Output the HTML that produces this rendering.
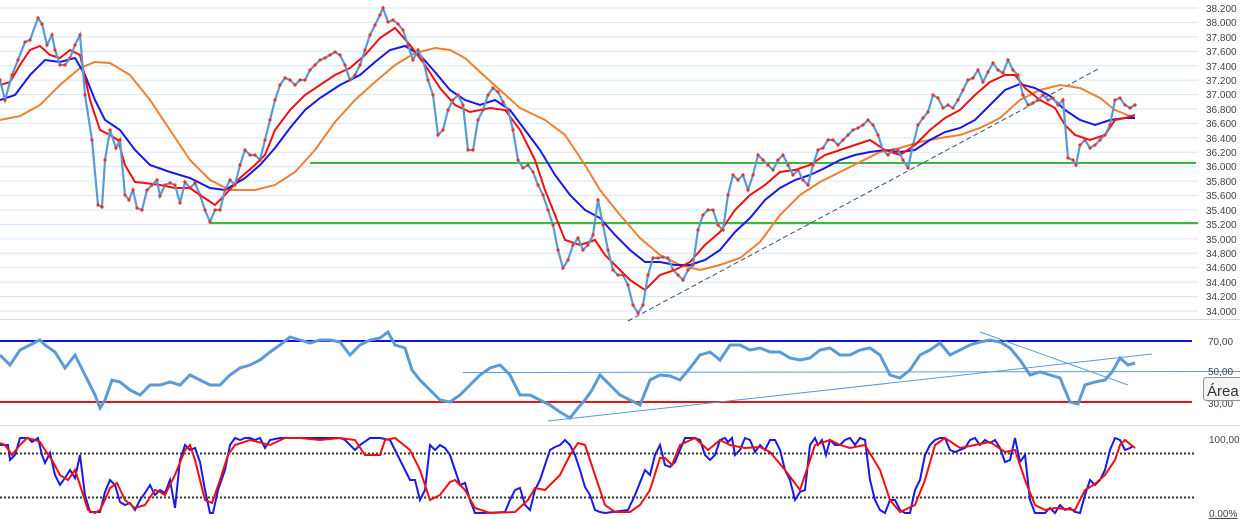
<!DOCTYPE html>
<html><head><meta charset="utf-8"><style>
html,body{margin:0;padding:0;background:#fff;width:1240px;height:519px;overflow:hidden}
svg{display:block}
text{font-family:"Liberation Sans",sans-serif;font-size:10px;fill:#444}
</style></head><body>
<svg width="1240" height="519" viewBox="0 0 1240 519" xmlns="http://www.w3.org/2000/svg">
<defs>
<marker id="d" markerWidth="4" markerHeight="4" refX="2" refY="2" markerUnits="userSpaceOnUse"><circle cx="2" cy="2" r="1.6" fill="#f03020"/></marker>
</defs>
<g stroke="#d6e6f4" stroke-width="1">
<line x1="0" x2="1198" y1="8" y2="8"/><line x1="0" x2="1198" y1="22.4" y2="22.4"/><line x1="0" x2="1198" y1="36.9" y2="36.9"/><line x1="0" x2="1198" y1="51.3" y2="51.3"/><line x1="0" x2="1198" y1="65.7" y2="65.7"/><line x1="0" x2="1198" y1="80.1" y2="80.1"/><line x1="0" x2="1198" y1="94.6" y2="94.6"/><line x1="0" x2="1198" y1="109" y2="109"/><line x1="0" x2="1198" y1="123.4" y2="123.4"/><line x1="0" x2="1198" y1="137.9" y2="137.9"/><line x1="0" x2="1198" y1="152.3" y2="152.3"/><line x1="0" x2="1198" y1="166.7" y2="166.7"/><line x1="0" x2="1198" y1="181.1" y2="181.1"/><line x1="0" x2="1198" y1="195.6" y2="195.6"/><line x1="0" x2="1198" y1="210" y2="210"/><line x1="0" x2="1198" y1="224.4" y2="224.4"/><line x1="0" x2="1198" y1="238.9" y2="238.9"/><line x1="0" x2="1198" y1="253.3" y2="253.3"/><line x1="0" x2="1198" y1="267.7" y2="267.7"/><line x1="0" x2="1198" y1="282.1" y2="282.1"/><line x1="0" x2="1198" y1="296.6" y2="296.6"/><line x1="0" x2="1198" y1="311" y2="311"/>
</g>
<g text-anchor="start">
<text x="1206" y="12">38.200</text><text x="1206" y="26">38.000</text><text x="1206" y="41">37.800</text><text x="1206" y="55">37.600</text><text x="1206" y="70">37.400</text><text x="1206" y="84">37.200</text><text x="1206" y="98">37.000</text><text x="1206" y="113">36.800</text><text x="1206" y="127">36.600</text><text x="1206" y="142">36.400</text><text x="1206" y="156">36.200</text><text x="1206" y="170">36.000</text><text x="1206" y="185">35.800</text><text x="1206" y="199">35.600</text><text x="1206" y="214">35.400</text><text x="1206" y="228">35.200</text><text x="1206" y="243">35.000</text><text x="1206" y="257">34.800</text><text x="1206" y="271">34.600</text><text x="1206" y="286">34.400</text><text x="1206" y="300">34.200</text><text x="1206" y="315">34.000</text>
</g>
<line x1="0" x2="1240" y1="319.5" y2="319.5" stroke="#d8d8d8"/>
<line x1="0" x2="1240" y1="425.5" y2="425.5" stroke="#d8d8d8"/>
<line x1="310" x2="1196" y1="163" y2="163" stroke="#3cb83c" stroke-width="2"/>
<line x1="210" x2="1198" y1="223" y2="223" stroke="#3cb83c" stroke-width="2"/>
<line x1="628" y1="321" x2="1100" y2="68" stroke="#34507a" stroke-width="1" stroke-dasharray="5,3"/>
<polyline fill="none" stroke="#f08030" stroke-width="2" points="0,120 20,116 40,105 60,85 80,68 95,62 110,63 130,75 150,100 170,130 190,160 210,180 230,190 255,190 275,185 295,172 315,150 335,122 355,100 375,82 395,65 415,53 435,48 450,50 465,58 480,72 500,90 520,108 545,120 565,135 585,165 600,190 620,215 640,238 660,255 680,265 700,270 720,265 740,258 760,242 780,215 800,195 820,182 840,172 860,162 880,152 900,148 920,142 940,138 960,135 980,128 1000,118 1020,100 1040,90 1060,85 1080,88 1100,98 1115,110 1135,118"/>
<polyline fill="none" stroke="#1818e8" stroke-width="2" points="0,100 15,95 30,75 45,60 60,62 75,58 85,75 95,100 105,120 120,130 135,150 150,165 170,172 190,178 210,188 225,190 245,178 260,165 275,148 290,128 305,110 320,98 340,85 360,75 375,62 390,50 405,46 420,55 435,72 450,90 465,100 480,105 495,100 510,110 525,130 540,150 555,175 570,195 585,210 600,218 615,235 630,250 645,262 660,262 675,265 690,265 705,260 720,250 735,232 750,218 765,200 780,188 795,180 810,175 825,168 840,160 855,155 870,152 885,150 900,152 915,150 930,140 945,132 960,128 975,120 990,105 1005,90 1020,84 1035,88 1050,96 1065,110 1080,120 1095,125 1110,120 1125,118 1135,118"/>
<polyline fill="none" stroke="#f01010" stroke-width="2" points="0,85 10,82 20,65 30,50 40,46 50,55 60,58 70,50 80,55 90,100 100,130 110,135 118,140 125,165 135,182 145,183 160,185 175,188 190,188 200,195 215,205 225,195 240,178 255,165 265,155 275,130 290,110 305,95 320,85 335,75 350,68 365,55 380,38 395,28 410,45 425,65 440,88 455,105 470,112 490,108 505,110 520,130 535,160 545,190 555,215 565,240 580,245 595,240 605,255 615,265 630,280 645,290 660,275 675,270 690,262 705,245 720,232 735,210 750,195 765,185 780,172 795,170 810,165 825,155 840,150 855,145 870,140 885,150 900,155 915,145 930,130 945,118 960,110 975,95 990,82 1005,75 1015,75 1025,88 1040,100 1055,108 1065,125 1075,135 1090,140 1105,135 1115,120 1125,118 1135,115"/>
<polyline fill="none" stroke="#5b9bd5" stroke-width="2.2" marker-start="url(#d)" marker-mid="url(#d)" marker-end="url(#d)" points="0,80 5,100 12,75 18,60 25,42 30,40 38,18 42,24 47,45 52,35 55,50 60,65 65,65 70,58 75,45 80,35 85,95 92,140 98,205 102,207 105,160 110,130 116,148 120,140 125,195 129,200 133,190 137,208 142,210 147,190 152,185 157,180 160,196 165,185 170,183 175,185 180,203 185,182 190,188 195,183 200,195 205,210 210,222 215,210 220,210 225,190 230,180 235,185 240,165 245,150 250,155 255,155 260,160 265,140 270,120 275,100 280,85 285,78 290,80 295,85 300,80 305,80 310,70 315,65 320,60 325,58 330,55 335,52 340,55 345,65 350,80 355,75 360,65 365,50 370,35 375,25 380,15 383,8 388,22 393,20 398,24 403,30 408,45 413,60 418,50 423,60 428,80 433,95 438,135 443,130 448,110 453,100 458,95 463,105 468,150 473,150 478,120 483,110 488,95 493,88 498,92 503,102 508,110 513,130 518,160 523,168 528,165 533,172 538,185 543,195 548,210 553,225 558,250 563,268 568,260 573,245 578,238 583,250 588,245 593,235 598,200 603,225 608,250 613,270 618,275 623,275 628,285 633,305 638,313 643,305 648,275 653,258 658,258 663,257 668,258 673,270 678,275 683,280 688,270 693,265 698,230 703,215 708,210 713,210 718,225 723,230 728,195 733,175 738,180 743,175 748,190 753,175 758,155 763,160 768,165 773,170 778,160 783,155 788,165 793,175 798,170 803,180 808,185 813,165 818,150 823,148 828,140 833,140 838,145 843,140 848,135 853,130 858,128 863,125 868,120 873,125 878,135 883,150 888,155 893,150 898,150 903,160 908,168 913,145 918,125 923,118 928,112 933,95 938,98 943,108 948,105 953,108 958,100 963,90 968,80 973,78 978,70 983,82 988,72 993,63 998,70 1003,73 1008,60 1013,70 1018,75 1023,95 1028,105 1033,103 1038,100 1043,95 1048,100 1053,98 1058,105 1063,100 1068,158 1073,160 1076,165 1080,145 1085,140 1090,148 1095,145 1100,140 1105,135 1110,125 1115,100 1120,98 1125,105 1130,108 1135,105"/>
<!-- RSI -->
<line x1="0" x2="1192" y1="341" y2="341" stroke="#1010e0" stroke-width="2"/>
<line x1="0" x2="1192" y1="402" y2="402" stroke="#f01010" stroke-width="2"/>
<line x1="463" x2="1240" y1="372.5" y2="371.5" stroke="#5b9bd5" stroke-width="1"/>
<line x1="548" y1="421" x2="1152" y2="354" stroke="#5b9bd5" stroke-width="1"/>
<line x1="980" y1="332" x2="1128" y2="385" stroke="#5b9bd5" stroke-width="1"/>
<polyline fill="none" stroke="#5b9bd5" stroke-width="3" points="0,355 10,365 20,350 30,345 40,340 45,345 55,352 65,368 75,355 85,375 95,395 100,408 105,400 112,380 120,382 130,390 140,395 150,385 160,385 170,382 180,385 190,375 200,380 210,385 220,385 230,375 240,368 250,365 260,360 270,352 280,345 290,337 300,340 310,343 320,340 330,340 340,342 350,355 360,345 370,340 380,338 388,332 395,345 405,348 412,370 420,380 430,390 440,400 450,402 460,395 470,385 480,375 490,368 500,365 510,375 520,395 530,395 540,400 550,405 560,412 570,418 578,408 585,400 592,390 600,375 610,385 620,395 630,400 640,405 650,380 660,375 670,376 680,380 690,368 700,355 710,352 720,360 730,345 740,345 750,350 760,348 770,352 780,352 790,358 800,360 810,358 820,350 830,348 840,355 850,355 860,350 870,348 880,355 890,375 900,378 910,370 920,355 930,350 940,343 950,355 960,350 970,345 980,342 990,340 1000,342 1010,348 1020,360 1030,375 1040,372 1050,375 1060,378 1070,402 1078,404 1085,385 1095,382 1105,380 1112,372 1120,358 1128,365 1135,363"/>
<text x="1208" y="345">70,00</text>
<text x="1208" y="375">50,00</text>
<text x="1208" y="407">30,00</text>
<rect x="1203.5" y="377.5" width="40" height="23" rx="3" fill="#f4f4f6" stroke="#909090"/>
<text x="1207" y="396" style="font-size:15px;fill:#333">Área</text>
<!-- Stoch -->
<line x1="0" x2="1196" y1="453.5" y2="453.5" stroke="#333" stroke-width="2" stroke-dasharray="2,2"/>
<line x1="0" x2="1196" y1="497.5" y2="497.5" stroke="#333" stroke-width="2" stroke-dasharray="2,2"/>
<polyline fill="none" stroke="#1a1ae8" stroke-width="2" points="0,445 8,445 10,460 15,455 20,438 28,438 32,442 38,438 42,455 45,463 50,453 55,475 60,485 65,478 70,470 75,478 80,455 85,495 90,512 100,512 105,492 110,480 115,485 120,502 125,505 130,503 135,510 140,500 145,493 150,485 155,495 160,490 165,493 170,480 175,508 180,460 185,445 190,450 195,448 200,462 205,490 210,513 213,513 218,490 225,470 230,445 235,438 240,440 245,438 250,438 255,440 260,438 265,448 270,440 280,438 300,438 325,438 340,438 345,440 350,445 355,450 360,445 370,438 380,438 390,440 400,460 410,480 415,480 420,500 425,490 430,445 435,450 440,445 445,448 450,455 455,470 460,485 465,483 470,500 475,513 485,513 505,512 510,500 515,490 520,488 525,505 530,510 535,490 540,480 545,465 550,450 555,447 560,445 565,440 570,445 575,455 580,470 585,487 590,495 595,510 600,512 605,513 628,510 635,495 645,470 650,475 655,455 660,445 665,465 670,467 675,462 680,450 685,438 695,438 700,440 705,455 710,460 715,455 720,440 725,438 728,442 732,438 735,455 740,450 745,438 750,440 755,452 760,445 765,450 770,440 775,440 780,450 785,470 790,480 795,500 800,492 805,490 810,445 815,438 818,445 822,440 826,455 830,440 835,445 840,445 845,440 850,438 855,445 860,438 865,440 870,480 875,500 880,510 885,513 890,500 895,500 900,510 905,513 910,513 915,490 920,480 925,455 930,445 935,440 940,438 945,438 950,450 955,452 960,450 965,448 970,440 975,438 980,445 985,440 990,443 995,440 1000,448 1005,462 1010,460 1015,438 1020,462 1025,455 1030,500 1035,513 1045,513 1050,508 1055,513 1060,505 1065,510 1070,508 1075,512 1080,513 1085,495 1090,480 1095,485 1100,480 1105,470 1110,450 1115,438 1120,440 1125,450 1130,448 1133,446"/>
<polyline fill="none" stroke="#f01010" stroke-width="2" points="0,443 5,445 12,455 20,445 27,438 35,440 40,442 45,450 52,460 60,475 68,480 75,470 80,485 88,510 95,513 100,510 105,500 110,488 117,483 125,500 135,508 145,505 155,490 160,492 165,495 175,475 185,450 190,445 195,460 205,500 212,503 220,480 228,455 235,445 250,440 270,445 285,438 300,438 320,440 340,438 355,440 365,455 380,455 385,440 395,438 410,450 420,470 430,500 440,495 450,482 455,480 465,490 475,508 490,513 515,512 528,500 535,488 545,490 560,475 565,465 570,455 578,443 585,445 595,475 605,505 615,512 630,512 640,505 650,490 660,458 665,458 672,465 680,445 695,438 708,450 720,440 730,445 745,448 760,447 770,452 785,470 800,490 810,460 815,445 830,440 840,445 850,448 865,445 880,470 890,500 900,512 915,505 925,480 935,445 945,438 960,448 975,445 990,442 1005,452 1015,450 1025,480 1035,505 1045,510 1055,508 1075,510 1085,490 1095,484 1105,475 1115,460 1120,445 1125,440 1135,448"/>
<text x="1209" y="443">100,00</text>
<text x="1209" y="517" text-decoration="underline">0.00%</text>
</svg>
</body></html>
